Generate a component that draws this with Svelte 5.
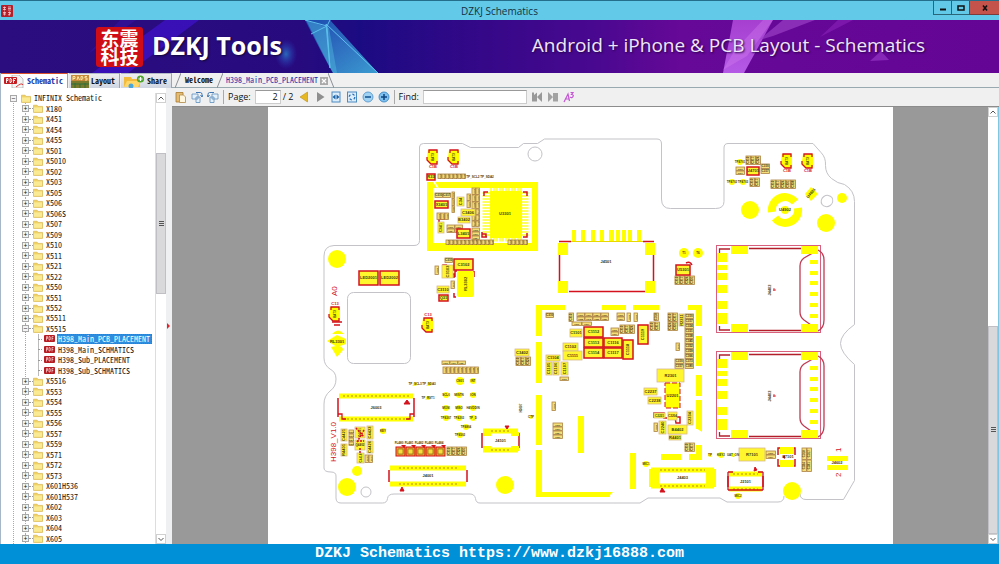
<script>
  const models = [
    'X180', 'X451', 'X454', 'X455', 'X501', 'X5010', 'X502', 'X503', 'X505', 'X506', 'X506S',
    'X507', 'X509', 'X510', 'X511', 'X521', 'X522', 'X550', 'X551', 'X552', 'X5511', 'X5515',
    'X5516', 'X553', 'X554', 'X555', 'X556', 'X557', 'X559', 'X571', 'X572', 'X573',
    'X601H536', 'X601H537', 'X602', 'X603', 'X604', 'X605'
  ];
  const files = ['H398_Main_PCB_PLACEMENT', 'H398_Main_SCHMATICS', 'H398_Sub_PLACEMENT', 'H398_Sub_SCHMATICS'];
  const rows = [];
  for (const name of models) {
    rows.push({ kind: 'folder', name, open: name === 'X5515' });
    if (name === 'X5515') for (const f of files) rows.push({ kind: 'file', name: f });
  }
  let selected = $state(files[0]);
  let page = $state('2');
  let find = $state('');

  // Bare copper pads: x, y, width, height
  const pads = [
    [536, 305, 29, 5], [602, 305, 24, 5], [633, 305, 26, 5], [688, 305, 14, 5],
    [536, 305, 6, 31], [536, 342, 6, 41], [536, 395, 6, 50], [536, 450, 6, 47], [536, 492, 74, 5],
    [578, 416, 6, 37], [630, 453, 6, 36],
    [696, 305, 6, 21], [696, 336, 6, 30], [696, 375, 6, 21], [696, 400, 6, 29], [696, 445, 6, 14],
    [661, 454, 20, 6], [689, 454, 13, 6],
    [558, 243, 10, 12], [645, 243, 10, 12], [558, 281, 10, 12], [645, 281, 10, 12],
    [572, 230, 4, 11], [581, 230, 4, 11], [591, 230, 4, 11], [600, 230, 4, 11], [609, 230, 5, 11],
    [616, 230, 4, 11], [622, 230, 4, 11], [628, 230, 4, 11], [637, 230, 4, 11],
    [827, 456, 21, 5], [827, 465, 21, 5]
  ];
  const dots = [
    [337, 259, 9], [750, 210, 9], [826, 223, 9], [842, 198, 5], [347, 487, 9], [357, 471, 5],
    [505, 485, 9], [792, 491, 9]
  ];
  // Test points: x, y, radius, label
  const points = [
    [684, 253, 5, 'T1'], [698, 253, 5, 'T6'], [460, 381, 4, 'CN01'], [473, 381, 3, 'INT'],
    [446, 395, 3, 'SCL0'], [459, 395, 3, 'MISTN'], [473, 395, 3, 'ION'], [446, 408, 3, 'MOSI'],
    [459, 408, 3, 'MISO'], [473, 408, 3, 'H4VDDIN'], [446, 418, 3, 'TP4307'], [459, 418, 3, 'TP4203'],
    [473, 418, 3, 'TP_D'], [466, 427, 3, 'TP4804'], [460, 435, 3, 'TP4502'], [415, 384, 2, 'TP_SCL3'],
    [429, 384, 2, 'TP_SDA3'], [428, 398, 2, 'TP_RST1'], [383, 431, 3, 'KEY'], [531, 417, 2, 'CTP'],
    [646, 464, 3, 'MIC1'], [710, 455, 2, 'TP'], [721, 455, 3, 'KEY2'], [733, 455, 2, 'UAT_ON'],
    [738, 496, 3, 'MIC2'], [740, 162, 3, 'TP4701'], [732, 182, 3, 'TP4702'], [743, 182, 3, 'TP4703']
  ];
  // Passives: x, y, width, height, designator
  const parts = [
    [461, 209, 14, 7, 'C3406'], [458, 217, 12, 6, 'B3402'], [457, 197, 7, 9, 'C34'],
    [438, 222, 6, 11, 'C3401'], [442, 265, 11, 13, 'C3103'], [437, 286, 12, 7, 'C3110'],
    [341, 429, 6, 12, 'C4421'], [341, 444, 6, 12, 'R4401'], [367, 426, 6, 13, 'C4423'],
    [367, 441, 6, 12, 'C4426'], [357, 453, 7, 10, 'C4418'], [355, 427, 10, 11, 'Q4401'], [355, 440, 10, 10, 'Q4402'],
    [515, 349, 14, 7, 'C3402'], [570, 329, 12, 8, 'C1101'], [563, 343, 15, 8, 'C1102'],
    [563, 351, 19, 9, 'C1111'], [546, 355, 14, 6, 'C1104'], [546, 362, 6, 13, 'C1105'],
    [553, 362, 6, 13, 'C1106'], [561, 362, 7, 13, 'C1107'], [679, 314, 5, 12, 'R2311'],
    [657, 369, 27, 13, 'R2301'], [644, 388, 13, 7, 'C2237'], [648, 397, 13, 7, 'C2238'],
    [654, 413, 11, 5, 'C2231'], [668, 412, 9, 8, 'C2204'], [659, 421, 7, 13, 'C2240'],
    [687, 411, 6, 14, 'C2234'], [668, 425, 19, 9, 'B4402'], [669, 435, 12, 5, 'R4401'],
    [739, 448, 26, 13, 'R7101']
  ];
  // Parts inside a red courtyard
  const boxed = [
    [359, 271, 19, 14, 'LED2001'], [380, 271, 19, 14, 'LED2002'], [454, 259, 19, 11, 'C3102'],
    [457, 229, 13, 9, 'L3401'], [435, 201, 13, 7, 'X3401'], [584, 327, 19, 10, 'C1112'],
    [584, 338, 19, 9, 'C1113'], [584, 348, 19, 10, 'C1114'], [604, 338, 18, 9, 'C1116'],
    [604, 348, 18, 10, 'C1117'], [623, 340, 10, 19, 'C1118'], [638, 325, 10, 19, 'C1119'],
    [676, 265, 14, 10, 'U5301'], [747, 167, 12, 8, 'U4701'], [439, 295, 9, 6, 'Q31'], [427, 174, 8, 6, 'R33']
  ];
  // Blocks of tiny parts: x, y, columns, rows, cell width, cell height
  const blocks = [
    [435, 193, 2, 1, 8, 5], [452, 192, 1, 3, 3, 7], [472, 188, 2, 3, 4, 7], [472, 209, 2, 3, 4, 6],
    [467, 194, 1, 2, 4, 7], [437, 213, 3, 1, 4, 7], [447, 225, 2, 2, 8, 4], [472, 228, 1, 3, 8, 4],
    [438, 174, 7, 1, 4, 5], [446, 240, 12, 1, 4, 5], [508, 240, 5, 1, 4, 5],
    [445, 258, 1, 1, 8, 5], [435, 266, 1, 1, 4, 9], [451, 281, 1, 1, 4, 8],
    [442, 361, 3, 1, 8, 4], [443, 367, 9, 1, 4, 7], [349, 430, 1, 4, 5, 4], [365, 455, 2, 1, 4, 8],
    [447, 447, 4, 1, 5, 9], [516, 357, 3, 1, 5, 9], [546, 313, 1, 1, 8, 5], [569, 313, 1, 1, 5, 9],
    [577, 313, 4, 2, 8, 4], [572, 322, 2, 1, 10, 4], [617, 313, 1, 2, 8, 4], [627, 313, 1, 1, 4, 9],
    [634, 313, 1, 1, 4, 9], [654, 313, 1, 1, 5, 8], [611, 328, 1, 2, 8, 4], [620, 325, 3, 1, 5, 9],
    [650, 322, 2, 1, 5, 9], [668, 313, 2, 2, 5, 9], [685, 314, 1, 11, 9, 5], [676, 343, 1, 1, 4, 8],
    [675, 359, 1, 2, 9, 5], [560, 377, 1, 1, 9, 4], [552, 402, 1, 1, 4, 9], [553, 423, 1, 4, 10, 4],
    [654, 423, 1, 1, 4, 9], [685, 443, 2, 1, 5, 9], [675, 276, 4, 1, 5, 9],
    [746, 156, 3, 1, 5, 9], [761, 164, 1, 2, 9, 5], [736, 167, 1, 2, 9, 4], [750, 178, 2, 1, 5, 9],
    [771, 180, 5, 1, 5, 9], [766, 451, 1, 2, 10, 4], [802, 448, 2, 2, 5, 12]
  ];
  const cells = blocks.flatMap(([x, y, cols, count, w, h]) =>
    Array.from({ length: cols * count }, (_, i) => [x + (i % cols) * w, y + Math.floor(i / cols) * h, w - 0.6, h - 0.6, 'C' + (310 + i * 7)])
  );
  // Largest whole font size at which a designator fits its part
  const fit = (w, h, text) => Math.max(2, Math.min(4, Math.round(Math.min(w, h)) - 1, Math.floor(Math.max(w, h) / (text.length * 0.6))));
  const filters = [396, 406, 416, 426, 436];
  // Fine-pitch board connectors: x, y, width, height, end pad width, label
  const connectors = [
    [338, 395, 76, 25, 5, 'J6003'], [389, 467, 78, 18, 10, 'J4001'],
    [482, 430, 37, 21, 9, 'J4101'], [650, 469, 65, 18, 10, 'J4403'], [728, 473, 35, 17, 5, 'J2101']
  ];
  // Spring clips: x, y, label
  const clips = [[427, 149, 'C1B'], [448, 149, 'C1B'], [781, 153, 'C1B'], [802, 153, 'C1B'], [329, 306, 'C13'], [422, 317, 'C13']];
  const trays = [0, 106];
  const trayLeft = [[253, 9], [265, 5], [273, 7], [285, 8], [301, 8], [313, 11]];
  const trayRight = [260, 271, 281, 292, 303, 314];
</script>

{#snippet folder()}
  <svg class="folder" viewBox="0 0 10 9" aria-hidden="true">
    <path d="M.5 1.2h3.6l1 1.2h4.4v6h-9z" fill="#efd263" stroke="#d3ae42" stroke-width=".6" />
    <path d="M1 3.4h8v4.4H1z" fill="#fbea94" />
  </svg>
{/snippet}

{#snippet label(x, y, w, h, text)}
  {#if h > w}
    <text transform="translate({x + w / 2 + 1} {y + h / 2}) rotate(-90)" class="ref" style:font-size="{fit(w, h, text)}px">{text}</text>
  {:else}
    <text x={x + w / 2} y={y + h / 2 + 1} class="ref" style:font-size="{fit(w, h, text)}px">{text}</text>
  {/if}
{/snippet}

<div class="app">
  <header class="titlebar">
    <svg class="appicon" viewBox="0 0 12 12" aria-hidden="true">
      <rect width="12" height="12" rx="1" fill="#b3202a" />
      <path d="M2 2.500h3M3.500 1.500v4M2 4.500h3M7 2h3M7 3.500h3M7 5h3M2 7.500h3M3.500 6.500v4M2 9h3M7 7.500h3M8.500 6.500v4M7 10l3-1.500" stroke="#f3c9cc" stroke-width=".8" fill="none" />
    </svg>
    <h1>DZKJ Schematics</h1>
    <div class="winbtns">
      <button aria-label="Minimize"><svg viewBox="0 0 10 8"><path d="M2 5.500h6" stroke="#111" stroke-width="2" /></svg></button>
      <button aria-label="Maximize"><svg viewBox="0 0 10 8"><rect x="2" y="2" width="6" height="4" fill="none" stroke="#111" stroke-width="1.500" /></svg></button>
      <button class="close" aria-label="Close"><svg viewBox="0 0 10 8"><path d="M3 1.500l4 5M7 1.500l-4 5" stroke="#111" stroke-width="1.600" /></svg></button>
    </div>
  </header>

  <div class="banner">
    <svg class="art" viewBox="0 0 999 53" preserveAspectRatio="none" aria-hidden="true">
      <defs>
        <linearGradient id="glass" x1="0" y1="0" x2="1" y2="1">
          <stop offset="0" stop-color="#1b4bb0" /><stop offset=".5" stop-color="#2f6fc0" /><stop offset="1" stop-color="#3a9bd0" />
        </linearGradient>
        <linearGradient id="pink" x1="0" y1="0" x2="0" y2="1">
          <stop offset="0" stop-color="#a63fd0" /><stop offset="1" stop-color="#b45ae6" />
        </linearGradient>
        <radialGradient id="glow"><stop offset="0" stop-color="#2a7fc8" stop-opacity=".8" /><stop offset="1" stop-color="#2a3fc8" stop-opacity="0" /></radialGradient>
      </defs>
      <path d="M165 0h34L128 53H92z" fill="#3d12c8" opacity=".75" />
      <path d="M120 0h16L88 34z" fill="#3a14a8" opacity=".5" />
      <ellipse cx="286" cy="34" rx="11" ry="15" fill="url(#glow)" />
      <path d="M305 0h25l48 53h-45q-5-8-28-53z" fill="url(#glass)" />
      <path d="M305 0l22 6 3 42-4-44 52 49M327 6l-16 8M330 0l-3 6" fill="none" stroke="#5fc0ee" stroke-width="1" />
      <path d="M306 0l27 53h4L329 8z" fill="#54c3e0" opacity=".4" />
      <path d="M733 0h40l-29 53h-21z" fill="url(#pink)" />
      <path d="M723 50l24-14 26-36h-10l-28 30z" fill="#d880f0" opacity=".35" />
      <path d="M783 0h32l-42 16-14 4z" fill="#9a3fc4" opacity=".7" />
      <path d="M838 0h15l-33 17z" fill="#8420b4" opacity=".7" />
      <path d="M870 41l11-10 8 9z" fill="#8e2fc0" opacity=".8" />
    </svg>
    <div class="brand">
      <div class="seal"><span>东震</span><span>科技</span></div>
      <strong>DZKJ Tools</strong>
    </div>
    <p>Android + iPhone &amp; PCB Layout - Schematics</p>
  </div>

  <div class="body">
    <aside>
      <nav class="modes">
        <button class="mode on">
          <svg viewBox="0 0 21 13" aria-hidden="true"><path d="M8 0h7l4 4v9H8z" fill="#f4f4f4" stroke="#aaa" stroke-width=".7" /><path d="M12 12q6-5 7-2" stroke="#d33" fill="none" /><rect y="2" width="13" height="7" rx="1" fill="#c41c20" /><path d="M2.500 8V3.500h1.500v2H2.500M6 3.500h1q1.500 2 0 4H6zM9.500 8V3.500H12M9.500 5.500H11" fill="none" stroke="#fff" stroke-width=".9" /></svg>
          <span>Schematic</span>
        </button>
        <button class="mode">
          <svg viewBox="0 0 18 13" aria-hidden="true"><rect width="18" height="13" fill="#7a7a2c" /><rect width="18" height="6" fill="#c9893a" /><path d="M2 5V1.500h2v2H2M6 5l1-3.500L8.500 5M10 1.500h1.500l.5 2-2 1.500zM16 1.500h-2v1.500h2v2h-2" fill="none" stroke="#fff3b0" stroke-width=".9" /><path d="M0 9h18M4 8v5M9 9v4M14 8v5" stroke="#2f6f38" /></svg>
          <span>Layout</span>
        </button>
        <button class="mode">
          <svg viewBox="0 0 22 13" aria-hidden="true"><path d="M1 2h7l1 2h8v8H1z" fill="#f3bb3c" /><path d="M1 12l3-6h14l-3 6z" fill="#ffd768" /><circle cx="8" cy="11" r="2.500" fill="#49a6dd" /><circle cx="17.500" cy="4" r="3.600" fill="#4ea52e" /><path d="M17.500 2v4M15.500 4h4" stroke="#fff" stroke-width="1.200" /></svg>
          <span>Share</span>
        </button>
      </nav>
      <div class="treewrap">
        <ul class="tree">
          <li class="root">
            <button class="toggle" aria-label="Collapse">−</button>{@render folder()}<span>INFINIX Schematic</span>
          </li>
          {#each rows as row}
            {#if row.kind === 'folder'}
              <li class="folderrow">
                <button class="toggle" aria-label={row.open ? 'Collapse' : 'Expand'}>{row.open ? '−' : '+'}</button>
                <i></i>{@render folder()}<span>{row.name}</span>
              </li>
            {:else}
              <li class="filerow">
                <i></i>
                <svg class="pdf" viewBox="0 0 11 8" aria-hidden="true"><rect width="11" height="7" rx="1" fill="#b51d22" /><path d="M2.500 5.500v-4h1v2h-1M5 1.500h1q1 2 0 3.500H5zM8 5.500v-4h1.500M8 3.500h1.300" fill="none" stroke="#f8dada" stroke-width=".7" /></svg>
                <a href="#{row.name}" class:selected={selected === row.name} onclick={() => (selected = row.name)}>{row.name}</a>
              </li>
            {/if}
          {/each}
        </ul>
        <div class="scroll left">
          <button aria-label="Scroll up"><svg viewBox="0 0 8 8"><path d="M1.500 5.500L4 3l2.500 2.500" /></svg></button>
          <div class="track"><div class="thumb"><b></b></div></div>
          <button aria-label="Scroll down"><svg viewBox="0 0 8 8"><path d="M1.500 3L4 5.500 6.500 3" /></svg></button>
        </div>
      </div>
    </aside>
    <div class="splitter"><svg viewBox="0 0 4 6" aria-hidden="true"><path d="M1 0l3 3-3 3z" fill="#e0262c" /></svg></div>

    <main>
      <nav class="tabs">
        <svg class="slant" viewBox="0 0 6 15" aria-hidden="true"><path d="M0 15L6 0" /></svg>
        <button>Welcome</button>
        <svg class="slant" viewBox="0 0 6 15" aria-hidden="true"><path d="M0 15L6 0" /></svg>
        <button class="active">H398_Main_PCB_PLACEMENT</button>
        <button class="x" aria-label="Close tab"><svg viewBox="0 0 8 8"><path d="M2 2l4 4M6 2L2 6" stroke="#fff" stroke-width="1.300" /></svg></button>
        <svg class="slant" viewBox="0 0 6 15" aria-hidden="true"><path d="M0 0l6 15" /></svg>
      </nav>
      <div class="toolbar">
        <button aria-label="Copy"><svg viewBox="0 0 12 12"><path d="M1 1.500h7V11H1z" fill="#e3bb72" stroke="#a87a2e" stroke-width=".8" /><path d="M4.500 4h4l2 2v5.500h-6z" fill="#fff6dd" stroke="#b08a4a" stroke-width=".8" /></svg></button>
        <button aria-label="Rotate left"><svg viewBox="0 0 12 12"><path d="M1 3h6v5H1zM5 6h4v5.500H5z" fill="#e4f0fa" stroke="#5d8fbd" stroke-width=".8" /><path d="M5 1.500h4.500q1.500 0 1.500 2v2M9.500 4l1.500 2 1-2" fill="none" stroke="#3f78b4" stroke-width="1" /></svg></button>
        <button aria-label="Rotate right"><svg viewBox="0 0 12 12"><path d="M5 3h6v5H5zM3 6h4v5.500H3z" fill="#e4f0fa" stroke="#5d8fbd" stroke-width=".8" /><path d="M7 1.500H2.500Q1 1.500 1 3.500v2M0 4l1 2 1.500-2" fill="none" stroke="#3f78b4" stroke-width="1" /></svg></button>
        <hr />
        <label for="page">Page:</label>
        <input id="page" class="page" bind:value={page} />
        <span class="total">/ 2</span>
        <button class="prev" aria-label="Previous page"><svg viewBox="0 0 12 12"><path d="M9.500 1v10L2 6z" fill="#e7b722" stroke="#b78c1a" stroke-width=".6" /></svg></button>
        <button aria-label="Next page"><svg viewBox="0 0 12 12"><path d="M3 1v10l7.500-5z" fill="#8f8f8f" /></svg></button>
        <button aria-label="Fit width"><svg viewBox="0 0 12 12"><rect x="2" y="1" width="8" height="10" fill="#dcedfb" stroke="#4d8ac0" /><path d="M5.500 3.500v5L2.500 6zM6.500 3.500v5l3-2.500z" fill="#1d62a8" /></svg></button>
        <button aria-label="Fit page"><svg viewBox="0 0 12 12"><rect x="1.500" y="1" width="9" height="10" fill="#dcedfb" stroke="#4d8ac0" /><circle cx="6" cy="6" r="2.800" fill="none" stroke="#2d72b8" stroke-dasharray="2.400 2" stroke-width="1.300" /></svg></button>
        <button aria-label="Zoom out"><svg viewBox="0 0 12 12"><circle cx="6" cy="6" r="5" fill="#9fd2f3" stroke="#4a8fc6" stroke-width=".8" /><path d="M3 6h6" stroke="#12508c" stroke-width="1.500" /></svg></button>
        <button aria-label="Zoom in"><svg viewBox="0 0 12 12"><circle cx="6" cy="6" r="5" fill="#7fc0ef" stroke="#2f7fc0" stroke-width=".8" /><path d="M3 6h6M6 3v6" stroke="#0d4580" stroke-width="1.500" /></svg></button>
        <hr />
        <label for="find">Find:</label>
        <input id="find" class="find" bind:value={find} />
        <button aria-label="Find previous"><svg viewBox="0 0 12 12"><path d="M1 1.500h2v9H1zM3 4l3-2.500v9H3zM11 1v10L6 6z" fill="#999" /></svg></button>
        <button aria-label="Find next"><svg viewBox="0 0 12 12"><path d="M1 1v10l5-5zM6 2h5v8.500H6z" fill="#a3a3a3" /></svg></button>
        <button aria-label="Match case"><svg viewBox="0 0 12 12"><path d="M1 11l4-8 1.500 7M2.500 8h4M7.500 1.500H10L8.500 3.500q2.500 0 1.500 2T7 6" fill="none" stroke="#c456d4" stroke-width="1.200" /></svg></button>
      </div>

      <div class="viewer">
        <div class="desk">
          <svg class="sheet" viewBox="268 107 625 437" role="img" aria-label="H398 main board placement">
            <rect x="268" y="107" width="625" height="437" fill="#fff" />
            <g fill="none" stroke="#c3c3c8" stroke-width="1">
              <path d="M784 496q0 6-6 6h-51l-7-4h-72l-8 5H480q-4 0-4.500-4.500-1-4.500-5.500-4.500h-76q-6 0-6.500 4.500t-5 4.500H341q-5 0-5-5V476q0-4-5-4-7 0-7-4V404q0-8 6-13 6-4 6-12 0-7-6-10-6-4-6-11V256q0-10 10-10.500h80q5.500 0 5.500-5V147q0-3.500 4-3.500h39l8 4h48l5-4h14l7-4.500H657q4.500 0 4.500 5v55q0 9.500 9 9.500h45q8.500 0 8.500-7V148q0-4.500 4-4.500h85l8 9q5 5 4.500 13 0 8 6 13t13 6q10 6 10 17v123q-14 10-14 19t14 21v116l-11 19H806q-6 0-6-6" />
              <rect x="347.500" y="292.500" width="63" height="71" rx="6" />
              <circle cx="535" cy="154" r="7" /><ellipse cx="827" cy="201" rx="6" ry="5.500" transform="rotate(-35 827 201)" /><circle cx="366" cy="492" r="5" />
            </g>

            <g fill="#ff0">
              {#each pads as [x, y, w, h]}<rect {x} {y} width={w} height={h} />{/each}
              {#each dots as [x, y, r]}<circle cx={x} cy={y} {r} />{/each}
              <path d="M427 182h111v69H427zM433 188v55h99v-55z" fill-rule="evenodd" />
              <path d="M609 492h4l-5 5h-2zM696 428h6v4z" />
              <rect x="490" y="191" width="32" height="47" />
              <path d="M332 334q6-7 12 0zM327 341l10-6 9 4v5l-9 3zM331 347q12-3 12 3l-6 7z" />
              <circle cx="785" cy="210" r="4" /><path d="M811 187l7 7-7 7-6-7z" />
            </g>
            <path d="M434 182l4 6" stroke="#fff" stroke-width="1.500" />
            <g fill="none" stroke="#ff0" stroke-width="8">
              <path d="M772 212a13 13 0 0 1 23-10M798 208a13 13 0 0 1-23 10" />
              <path d="M486 192v45M525 192v45" stroke-width="7" stroke-dasharray="2 1" opacity=".65" />
              <path d="M490 190h32M490 239h32" stroke-width="5" stroke-dasharray="2 1" opacity=".65" />
            </g>
            <g fill="none" stroke="#d4121d" stroke-width="1.500">
              <path d="M484 196v-4h4M523 192h4v4M482 232v5h5M527 233v4h-4M482 234h4v3" />
              <path d="M559 241.500h12M643 241.500h11M559.500 255v26M653.500 255v26M569 291.500h76" />
              <path d="M457 271h-2v6M474 271v6M449 274h5v4M456 297h-2v-4M443 270v-5h4M439 222v-3h6M667 418h-3v-5h-10v5M675 417h5v6h-4z" />
              <path d="M692 265q-2-4-6-2M778 455v-7h5M790 448h5v7M778 459v7h5M790 466h5v-7" />
            </g>
            <path d="M571 241.500h72" stroke="#e8d800" stroke-width="1" />

            {#each cells as [x, y, w, h, name]}
              <rect {x} {y} width={w} height={h} class="cell" />
              {@render label(x, y, w, h, name)}
            {/each}
            {#each parts as [x, y, w, h, name]}
              <rect {x} {y} width={w} height={h} class="part" />
              {@render label(x, y, w, h, name)}
            {/each}
            {#each boxed as [x, y, w, h, name]}
              <rect {x} {y} width={w} height={h} class="boxed" />
              {@render label(x, y, w, h, name)}
            {/each}

            <rect x="457" y="271" width="17" height="26" rx="2" fill="#ff0" />
            {@render label(457, 271, 17, 26, 'RL3302')}
            <rect x="665" y="383" width="15" height="25" fill="#ff0" stroke="#d4121d" stroke-dasharray="5 2" />
            {@render label(665, 392, 15, 8, 'U2201')}
            <path d="M356 428l8 9M364 430l-7 12M357 441h7M360 448v5" stroke="#d4121d" stroke-width="1.500" stroke-dasharray="2 1" />
            <path d="M780 447h14v7h-14zM780 460h14v7h-14z" fill="#ff0" /><path d="M782 457l3-2v4z" fill="#d4121d" />
            {@render label(781, 452, 14, 10, 'S7101')}

            {#each points as [x, y, r, name]}
              <circle cx={x} cy={y} {r} fill="#ff0" />
              <text {x} y={y + 1} class="ref small">{name}</text>
            {/each}
            {#each clips as [x, y, name]}
              <path d="M{x + 1} {y + 1}h10v14h-7l-4-3v-4z" fill="#ff0" />
              <path d="M{x + 2} {y + 4}v-3h8v3M{x} {y + 8}v3l4 4h6v-3" fill="none" stroke="#d4121d" stroke-width="1.300" />
              <text transform="translate({x + 7} {y + 8}) rotate(-90)" class="ref small">BAT3</text>
              <text x={x + 6} y={name === 'C13' ? y - 1 : y + 19} class="ref red">{name}</text>
            {/each}
            {#each filters as x, i}
              <rect {x} y="447" width="9" height="9" fill="#e8a030" stroke="#d4121d" />
              <rect x={x + 2} y="449" width="5" height="5" fill="#f6dc3c" stroke="#7a5a10" stroke-width=".6" />
              <path d="M{x + 5} 445h5l-2 3z" fill="#d4121d" />
              <text x={x + 3} y="444" class="ref small">FL48{i}</text>
            {/each}

            {#each connectors as [x, y, w, h, end, name]}
              <path d="M{x} {y + 3}v{h - 6}M{x + w} {y + 3}v{h - 6}" stroke="#d4121d" stroke-width="1.500" />
              <path d="M{x + 1} {y + 1}h{w - 2}M{x + 1} {y + h - 1}h{w - 2}" stroke="#ff0" stroke-width="5" />
              <path d="M{x + end} {y + 1}h{w - end * 2}M{x + end} {y + h - 1}h{w - end * 2}" stroke="#b98a20" stroke-width="1" stroke-dasharray="2 2" />
              <text x={x + w / 2} y={y + h / 2 + 1} class="ref">{name}</text>
            {/each}
            <g fill="none" stroke="#d4121d" stroke-width="1.300">
              <path d="M338 414h4v5h4M414 414h-4v5h-4M728 490h35M728 472h5M758 472h5M728 472v18M763 472v18" />
            </g>
            <path d="M649 469h10v18h-10zM706 469h10v18h-10z" fill="#ff0" />
            <path d="M483 432h8v4h-8zM511 432h8v4h-8zM483 446h8v5h-8zM511 446h8v5h-8z" fill="#ff0" />
            <path d="M404 404l3-4 3 4zM400 491l2-4 2 4zM505 426h4l-2 3zM660 492l2-4 3 4zM754 471l1-4 2 3z" fill="#d4121d" stroke="#d4121d" />
            <path d="M332 322h10M334 325h6" stroke="#d4121d" stroke-width="1.500" />

            {#each trays as dy}
              <g transform="translate(0 {dy})">
                <rect x="716.500" y="245.500" width="104" height="87" fill="none" stroke="#d9607c" />
                <g fill="none" stroke="#b3202c" stroke-width="1.300">
                  <path d="M719.500 253v-4H730M749 248.500h53M719.500 326v4H730M749 330.500h53" />
                  <path d="M818 250l-14 8q-4 3-4 8v46q0 5 4 8l14 10M818 250q6 3 6 10v60q0 8-6 11" stroke="#c03a52" />
                </g>
                <g fill="#ff0">
                  <rect x="731" y="246" width="17" height="8" /><rect x="801" y="246" width="17" height="8" />
                  <rect x="731" y="324" width="17" height="8" /><rect x="801" y="324" width="17" height="8" />
                  {#each trayLeft as [y, h]}<rect x="717" {y} width="10" height={h} />{/each}
                  {#each trayRight as y}<rect x="810" {y} width="8" height="4" />{/each}
                </g>
                <text transform="translate(771 290) rotate(-90)" class="ref">J4402</text>
                <path d="M773 290h3M774 288v3" stroke="#d4121d" stroke-width=".8" />
              </g>
            {/each}

            <text x="505" y="215" class="ref">U3301</text>
            <text x="606" y="263" class="ref">J4501</text>
            <text x="337" y="343" class="ref">RL3301</text>
            <text x="785" y="211" class="ref">U4902</text>
            <text x="837" y="464" class="ref">J4602</text>
            <text transform="translate(812 194) rotate(-50)" class="ref">U4601</text>
            <text x="480" y="178" class="ref small">TP_SCL2 TP_SDA2</text>
            <text transform="translate(522 408) rotate(-90)" class="ref small">H2007</text>
            <g class="mark">
              <text transform="translate(337 296) rotate(-90)">A0</text>
              <text transform="translate(336 462) rotate(-90)">H398_V1.0</text>
              <text transform="translate(841 452) rotate(-90)">1</text>
              <text transform="translate(841 477) rotate(-90)">2</text>
            </g>
          </svg>
        </div>
        <div class="scroll right">
          <button aria-label="Page up"><svg viewBox="0 0 8 8"><path d="M1.500 5.500L4 3l2.500 2.500" /></svg></button>
          <div class="track"><div class="thumb"><b></b></div></div>
          <button aria-label="Page down"><svg viewBox="0 0 8 8"><path d="M1.500 3L4 5.500 6.500 3" /></svg></button>
        </div>
      </div>
    </main>
  </div>

  <footer>DZKJ Schematics https://www.dzkj16888.com</footer>
</div>

<style>
  :global(body) { margin: 0; }
  .app { height: 100vh; display: flex; flex-direction: column; overflow: hidden; background: #f0f0f0; color: #111; font-family: "Open Sans", "Noto Sans CJK SC", sans-serif; }
  button { border: 0; padding: 0; margin: 0; background: none; font: inherit; color: inherit; }
  button svg { display: block; }
  .titlebar { height: 20px; flex: none; box-sizing: border-box; display: grid; grid-template-columns: 1fr auto 1fr; align-items: center; background: #63c9e9; border-top: 1px solid #246e8c; }
  .appicon { width: 12px; height: 12px; margin-left: 1px; }
  h1 { margin: 0; font-size: 10px; line-height: 18px; font-weight: 400; color: #15323e; }
  .winbtns { display: flex; justify-self: end; align-self: start; }
  .winbtns button { width: 18px; height: 14px; box-sizing: border-box; display: grid; place-items: center; border: 1px solid #2c6478; border-top: 0; border-right: 0; }
  .winbtns svg { width: 10px; height: 8px; }
  .winbtns .close { width: 30px; background: #c4534c; border-color: #7c3a3a; }
  .banner { position: relative; height: 53px; flex: none; display: flex; align-items: center; justify-content: space-between; padding: 0 74px 0 96px; color: #fff; background: linear-gradient(90deg, #2c0d80 0, #270b7e 30%, #1b0b82 36%, #340888 48%, #4a0890 60%, #660898 68%, #640596 100%); }
  .art { position: absolute; inset: 0; width: 100%; height: 100%; }
  .brand { position: relative; display: flex; align-items: center; gap: 9px; }
  .seal { width: 47px; height: 40px; border-radius: 3px; background: #cf0d16; display: flex; flex-direction: column; align-items: center; justify-content: center; font: 700 19px/18px "Noto Sans CJK SC", sans-serif; }
  .brand strong { font-size: 25px; line-height: 30px; margin-bottom: 4px; text-shadow: 1px 1px 2px #100838; }
  .banner p { position: relative; margin: 0 0 4px; font: 400 19px/24px "Open Sans", sans-serif; color: #f0e6fa; text-shadow: 1px 1px 2px #280448; }
  .body { flex: 1; min-height: 0; display: flex; }
  aside { width: 166px; flex: none; display: flex; flex-direction: column; border-left: 1px solid #a6b8c8; box-sizing: border-box; background: #fff; }
  .modes, .tabs, .tree { font: 8px/10px "Noto Sans Mono CJK SC", "Liberation Mono", monospace; }
  .modes { height: 15px; flex: none; display: flex; gap: 1px; background: #eee; margin-right: -6px; }
  .mode { display: flex; align-items: center; gap: 2px; padding: 0 4px 0 2px; background: linear-gradient(#eee, #cfd6e2); border-right: 1px solid #9aa4b4; border-top: 1px solid #b4bcc8; white-space: nowrap; font-weight: 700; }
  .mode svg { height: 13px; width: auto; flex: none; }
  .mode.on { background: #fff; color: #2438a8; border-top-color: #d8502c; padding-left: 3px; }
  .treewrap { flex: 1; min-height: 0; display: flex; padding-top: 5px; }
  .tree { flex: 1; min-width: 0; margin: 0; padding: 0; list-style: none; display: grid; grid-auto-rows: minmax(0, 1fr); background: repeating-linear-gradient(#aaa 0 1px, transparent 1px 2px) 12px 8px / 1px 100% no-repeat; white-space: nowrap; }
  li { display: flex; align-items: center; min-height: 0; }
  .root { padding-left: 9px; }
  .root .folder { margin-left: 4px; }
  .folderrow { padding-left: 21px; background: repeating-linear-gradient(#aaa 0 1px, transparent 1px 2px) 24px 0 / 1px 100% no-repeat; }
  .filerow { padding-left: 37px; background: linear-gradient(#bbb, #bbb) 37px 0 / 1px 100% no-repeat, repeating-linear-gradient(#aaa 0 1px, transparent 1px 2px) 24px 0 / 1px 100% no-repeat; }
  i { width: 4px; border-top: 1px dotted #999; }
  .toggle { width: 7px; height: 7px; box-sizing: border-box; border: 1px solid #a8a8a8; background: #f4f4f4; font-size: 7px; line-height: 5px; display: grid; place-items: center; flex: none; }
  .folder { width: 10px; height: 9px; margin-right: 3px; flex: none; }
  .pdf { width: 11px; height: 8px; margin: 0 2px; flex: none; }
  .tree a { color: #111; text-decoration: none; padding: 0 2px 0 1px; }
  .tree a.selected { background: #2f8ddf; color: #fff; outline: 1px dotted #8a6a40; outline-offset: -1px; }
  .scroll { display: flex; flex-direction: column; flex: none; background: #fff; }
  .scroll button { height: 10px; box-sizing: border-box; border: 1px solid #d0d0d0; display: grid; place-items: center; }
  .scroll svg { width: 8px; height: 8px; fill: none; stroke: #555; }
  .track { flex: 1; min-height: 0; display: flex; flex-direction: column; }
  .thumb { background: #d9d9dc; border: 1px solid #c0c0c4; box-sizing: border-box; display: grid; place-items: center; }
  .thumb b { width: 5px; height: 5px; background: repeating-linear-gradient(#555 0 1px, transparent 1px 2px); }
  .left { width: 11px; border-left: 1px solid #ddd; box-sizing: border-box; }
  .left .thumb { margin-top: 50px; height: 141px; }
  .right { width: 11px; box-sizing: border-box; border-right: 1px solid #7cc8e4; }
  .right .track { justify-content: flex-end; }
  .right .thumb { height: 50%; }
  .splitter { width: 6px; flex: none; background: #eef0f2; display: grid; place-items: center start; margin-top: 15px; padding-top: 19px; box-sizing: border-box; }
  .splitter svg { width: 4px; height: 6px; }
  main { flex: 1; min-width: 0; display: flex; flex-direction: column; }
  .tabs { height: 15px; flex: none; display: flex; align-items: stretch; padding-left: 3px; border-bottom: 1px solid #98aab0; box-sizing: border-box; }
  .tabs button { padding: 0 4px; font-weight: 700; }
  .tabs .active { color: #2028a8; padding: 0 0 0 3px; font-weight: 400; }
  .tabs .x { width: 8px; height: 8px; padding: 0; margin: 4px 0 0 2px; background: #aaa; }
  .slant { width: 6px; height: 15px; fill: none; stroke: #8a8f96; flex: none; }
  .toolbar { height: 19px; flex: none; box-sizing: border-box; display: flex; align-items: center; gap: 4px; padding-left: 3px; border-bottom: 1px solid #8c8c8c; font-size: 9px; line-height: 14px; }
  .toolbar button svg { width: 12px; height: 12px; }
  .toolbar hr { width: 1px; height: 14px; margin: 0; border: 0; background: #aaa; }
  .toolbar input { height: 14px; box-sizing: border-box; border: 1px solid #ccc; border-top-color: #999; border-radius: 0; background: #fff; padding: 0 2px; font: inherit; color: inherit; }
  .page { width: 26px; text-align: right; }
  .find { width: 104px; }
  .total { margin-left: -2px; }
  .viewer { flex: 1; min-height: 0; display: flex; }
  .desk { flex: 1; min-width: 0; display: flex; justify-content: center; background: #999; overflow: hidden; }
  .sheet { width: 625px; max-width: 100%; height: 100%; background: #fff; }
  .ref { font: 700 4px "Liberation Sans", sans-serif; text-anchor: middle; fill: #3c3a10; }
  .small { font-size: 3px; }
  .red { fill: #d4121d; }
  .cell { fill: #f4df7a; stroke: #ad8040; stroke-width: 0.8; }
  .part { fill: #fff62e; stroke: #d8b890; stroke-width: 0.8; }
  .boxed { fill: #fff62e; stroke: #d4121d; stroke-width: 1.5; }
  .mark { font: 8px "Liberation Sans", sans-serif; fill: #d4121d; }
  footer { height: 20px; flex: none; background: #0090d8; color: #fff; text-align: center; font: 700 15px/20px "Liberation Mono", monospace; }
</style>
